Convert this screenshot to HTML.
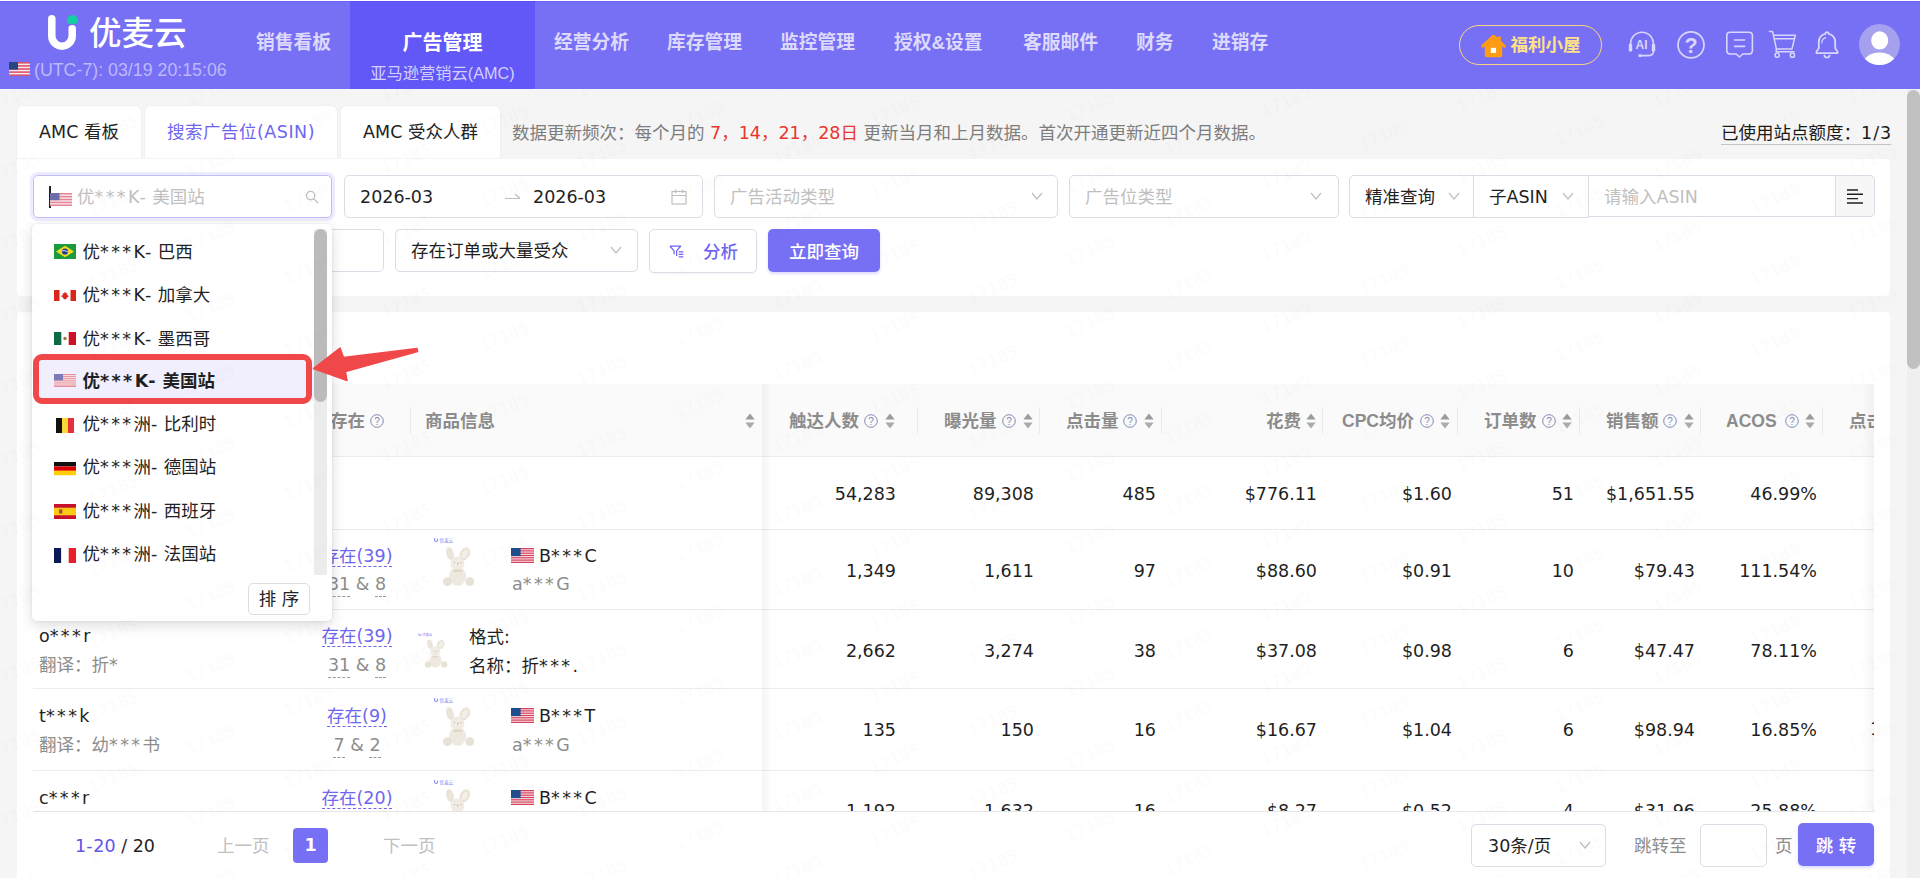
<!DOCTYPE html>
<html lang="zh-CN">
<head>
<meta charset="utf-8">
<title>优麦云 - 亚马逊营销云(AMC)</title>
<style>
*{box-sizing:border-box;margin:0;padding:0}
html,body{width:1920px;height:878px;overflow:hidden;background:#f5f5f5}
body{position:relative;font-family:"DejaVu Sans","Noto Sans CJK SC",sans-serif;font-size:17.5px;color:#1f1f1f;-webkit-font-smoothing:antialiased}
.abs{position:absolute}
.arial{font-family:"Liberation Sans","Noto Sans CJK SC",sans-serif}
svg{display:block}
/* ---------- header ---------- */
#hdr{position:absolute;left:0;top:1px;width:1920px;height:88px;background:#7770f5;font-family:"Liberation Sans","Noto Sans CJK SC",sans-serif}
#hdr .nav{position:absolute;top:0;height:88px;padding:0 19px;color:#dcd9fc;font-weight:bold;font-size:18.75px;line-height:84px;white-space:nowrap}
#hdr .nav.on{background:#6257f7;color:#fff;font-size:20px;line-height:84px;text-align:center}
#hdr .sub{position:absolute;left:0;right:0;top:60.5px;line-height:22px;font-size:16.25px;font-weight:normal;color:#d3cffd;text-align:center}
#logoTxt{position:absolute;left:89px;top:10px;font-size:32.5px;line-height:46px;color:#fff;font-weight:500;white-space:nowrap}
#tz{position:absolute;left:34px;top:57.5px;font-size:17.8px;line-height:22px;color:#bcb8fa;white-space:nowrap}
#pill{position:absolute;left:1459px;top:24px;width:143px;height:40px;border:1px solid #f7d67e;border-radius:20px}
#pill span{position:absolute;left:50.5px;top:0;line-height:38px;font-size:17.5px;font-weight:bold;color:#ffe18a;white-space:nowrap}
/* ---------- tabs ---------- */
.tab{position:absolute;top:105px;height:53px;background:#fff;border:1px solid #efefef;border-bottom:none;border-radius:7px 7px 0 0;line-height:52px;text-align:center;font-size:17.5px;color:#222;white-space:nowrap}
.tab.on{color:#6f66f0;letter-spacing:.5px}
#note{position:absolute;left:512px;top:119.5px;line-height:26px;font-size:17.5px;color:#7d7d7d;white-space:nowrap}
#note b{color:#e8352e;font-weight:normal}
#quota{position:absolute;left:1721px;top:120px;width:170px;line-height:26px;font-size:17.5px;color:#1a1a1a;border-bottom:1px solid #c4c4c4;white-space:nowrap;height:25px}
.card{position:absolute;background:#fff;border-radius:4px}

/* ---------- table ---------- */
#tbl{position:absolute;left:33px;top:384px;width:1841px;height:428px;overflow:hidden;background:#fff}
#thead{position:absolute;left:0;top:0;width:1841px;height:73px;background:#fafafa;border-bottom:1px solid #ececec}
.th{position:absolute;top:26px;line-height:22px;font-size:17.5px;font-weight:bold;color:#8c8c8c;white-space:nowrap;font-family:"Liberation Sans","Noto Sans CJK SC",sans-serif}
.vd{position:absolute;top:23px;width:1px;height:27px;background:#ebebeb}
.q{position:absolute;top:30px;width:14px;height:14px}
.so{position:absolute;top:29px;width:10px;height:16px}
.rl{position:absolute;left:0;width:1841px;height:1px;background:#ececec}
.num{position:absolute;line-height:26px;text-align:right;white-space:nowrap;font-size:17.5px;color:#1f1f1f}
.tx{position:absolute;line-height:26px;white-space:nowrap;font-size:17.5px;color:#1f1f1f}
.gr{color:#8c8c8c}
.lk{color:#6f66f0;border-bottom:1px dashed #6f66f0;line-height:24px;height:25px}
.du{border-bottom:1px dashed #9a9a9a;display:inline-block;line-height:22px;height:24px}
i.a{font-style:normal;letter-spacing:2.4px}
i.h{font-style:normal;letter-spacing:.9px}

/* ---------- dropdown ---------- */
#dd{position:absolute;left:32px;top:224px;width:300px;height:397px;background:#fff;border-radius:5px;box-shadow:0 4px 14px rgba(0,0,0,.14),0 0 3px rgba(0,0,0,.08)}
.opt{position:absolute;left:50.5px;line-height:26px;font-size:17.5px;color:#222;white-space:nowrap}
.fl{position:absolute;left:22px;width:22px;height:15px}
/* ---------- filter ---------- */
.inp{position:absolute;height:43px;background:#fff;border:1px solid #dddce6;border-radius:5px;line-height:42px;padding-left:15px;white-space:nowrap;font-size:17.5px;color:#1f1f1f}
.ph{color:#bfbfbf}
.chev{position:absolute;top:16px;width:12px;height:8px}
.btn{position:absolute;height:43px;border-radius:5px;line-height:46px;text-align:center;font-size:17.5px;white-space:nowrap}

</style>
</head>
<body>
<!-- HEADER -->
<div class="abs" style="left:0;top:0;width:1920px;height:1px;background:#fff"></div>
<div id="hdr">
  <div class="abs" style="left:0;top:0;width:1920px;height:1px;background:rgba(20,10,215,.12);z-index:2"></div>
  <svg class="abs" style="left:44px;top:10px" width="40" height="44" viewBox="44 11 40 44">
    <path d="M51.8 18.8 V36 A10.2 10.2 0 0 0 72.2 36 V28.8" fill="none" stroke="#fff" stroke-width="7.5" stroke-linecap="round"/>
    <path d="M67 20.6 a5.5 5.5 0 0 1 11 0 v1.2 q0 2 -2 2 h-7 q-2 0 -2 -2z" fill="#12cf9f"/>
  </svg>
  <div id="logoTxt">优麦云</div>
  <svg class="abs" style="left:9px;top:61px" width="21" height="14" viewBox="0 0 21 14">
    <rect width="21" height="14" fill="#f3e9ee"/>
    <g fill="#d9546a"><rect y="0" width="21" height="1.6"/><rect y="3.1" width="21" height="1.6"/><rect y="6.2" width="21" height="1.6"/><rect y="9.3" width="21" height="1.6"/><rect y="12.4" width="21" height="1.6"/></g>
    <rect width="9" height="7.6" fill="#27457f"/>
  </svg>
  <div id="tz">(UTC-7): 03/19 20:15:06</div>

  <div class="nav" style="left:237px">销售看板</div>
  <div class="nav on" style="left:350px;width:185px">广告管理<div class="sub">亚马逊营销云(AMC)</div></div>
  <div class="nav" style="left:535px">经营分析</div>
  <div class="nav" style="left:648px">库存管理</div>
  <div class="nav" style="left:761px">监控管理</div>
  <div class="nav" style="left:875px">授权&amp;设置</div>
  <div class="nav" style="left:1004px">客服邮件</div>
  <div class="nav" style="left:1117px">财务</div>
  <div class="nav" style="left:1193px">进销存</div>

  <div id="pill">
    <svg class="abs" style="left:20px;top:6px" width="28" height="26" viewBox="1480 31 28 26">
      <rect x="1497.600" y="35.5" width="3.200" height="7" fill="#ff9c12"/>
      <rect x="1484.800" y="43" width="17.400" height="13.200" rx="1.600" fill="#ff9c12"/>
      <path d="M1482.800 45.200 L1493.500 35.200 L1504.200 45.200" fill="none" stroke="#ff9c12" stroke-width="3" stroke-linecap="round" stroke-linejoin="round"/>
      <path d="M1486 44 L1493.500 37 L1501 44z" fill="#ff9c12"/>
      <rect x="1490.800" y="46.800" width="5.200" height="5.200" fill="#fff"/>
    </svg>
    <span>福利小屋</span>
  </div>
  <!-- header icons -->
  <svg class="abs" style="left:1624px;top:27px" width="36" height="34" viewBox="1624 28 36 34" fill="none" stroke="#d9d6fb" stroke-width="1.600" stroke-linecap="round">
    <path d="M1630.600 45 V43.600 A11.400 11.400 0 0 1 1653.400 43.600 V45"/>
    <rect x="1628.800" y="43.800" width="3.400" height="7.600" rx="1.200" fill="#d9d6fb" stroke="none"/>
    <rect x="1651.800" y="43.800" width="3.400" height="7.600" rx="1.200" fill="#d9d6fb" stroke="none"/>
    <path d="M1653.600 51 q0 4.600 -5 4.600 h-6.500"/>
    <rect x="1638.400" y="54.200" width="3.600" height="2.800" rx="1" fill="#d9d6fb" stroke="none"/>
    <text x="1641.600" y="48.500" font-family="Liberation Sans, sans-serif" font-size="12" font-weight="bold" fill="#d9d6fb" stroke="none" text-anchor="middle">AI</text>
  </svg>
  <svg class="abs" style="left:1675px;top:28px" width="32" height="32" viewBox="1675 29 32 32" fill="none" stroke="#d9d6fb" stroke-width="1.700">
    <circle cx="1691" cy="44.900" r="13"/>
    <text x="1691" y="52.900" font-family="Liberation Sans, sans-serif" font-size="21.5" font-weight="bold" fill="#d9d6fb" stroke="none" text-anchor="middle">?</text>
  </svg>
  <svg class="abs" style="left:1724px;top:28px" width="32" height="32" viewBox="1724 29 32 32" fill="none" stroke="#d9d6fb" stroke-width="1.600" stroke-linecap="round" stroke-linejoin="round">
    <path d="M1730 32.200 h19.200 a3.200 3.200 0 0 1 3.200 3.200 v15.400 a3.200 3.200 0 0 1 -3.200 3.200 h-6.400 l-3.300 3 l-3.300 -3 h-6.200 a3.200 3.200 0 0 1 -3.200 -3.200 v-15.400 a3.200 3.200 0 0 1 3.200 -3.200z"/>
    <path d="M1734.600 40 h10 M1734.600 46.400 h10"/>
  </svg>
  <svg class="abs" style="left:1766px;top:28px" width="34" height="32" viewBox="1766 29 34 32" fill="none" stroke="#d9d6fb" stroke-width="1.500" stroke-linecap="round" stroke-linejoin="round">
    <path d="M1769.400 31.600 h3.200 l3.800 17.300 h15.600 l3.300 -13.600 h-21.800"/>
    <path d="M1774.400 38.800 h20"/>
    <path d="M1776.600 49 q-1.600 2.800 1.200 2.800 h16.200"/>
    <circle cx="1777.200" cy="55.200" r="2.100"/><circle cx="1792.400" cy="55.200" r="2.100"/>
  </svg>
  <svg class="abs" style="left:1814px;top:29px" width="26" height="30" viewBox="0 0 26 30" fill="none" stroke="#d9d6fb" stroke-width="1.8" stroke-linecap="round" stroke-linejoin="round">
    <path d="M13 2.2 a1.6 1.6 0 0 1 1.6 1.6 a8 8 0 0 1 6.6 8 v6.5 l2.3 3.2 v1.7 H2.5 v-1.7 l2.3 -3.2 v-6.5 a8 8 0 0 1 6.6 -8 a1.6 1.6 0 0 1 1.6 -1.6z"/>
    <path d="M10.3 25.5 a2.8 2.8 0 0 0 5.4 0"/><path d="M7.800 13 a5.600 5.600 0 0 1 4 -5.400" stroke-width="1.200"/>
  </svg>
  <svg class="abs" style="left:1859px;top:23px" width="41" height="41" viewBox="0 0 41 41">
    <defs><clipPath id="avc"><circle cx="20.5" cy="20.5" r="20.5"/></clipPath></defs>
    <circle cx="20.5" cy="20.5" r="20.5" fill="#a6a1ee"/>
    <g clip-path="url(#avc)" fill="#fff"><ellipse cx="20.700" cy="16.400" rx="8.500" ry="9.200"/><ellipse cx="20.5" cy="41" rx="17" ry="12.5"/></g>
  </svg>
</div>

<!-- TABS -->
<div class="tab" style="left:16px;width:126px">AMC 看板</div>
<div class="tab on" style="left:144px;width:194px">搜索广告位(ASIN)</div>
<div class="tab" style="left:340px;width:161px">AMC 受众人群</div>
<div id="note">数据更新频次：每个月的 <b>7，14，21，28日</b> 更新当月和上月数据。首次开通更新近四个月数据。</div>
<div id="quota">已使用站点额度：1<span style="padding:0 1px">/</span>3</div>

<!-- FILTER CARD -->
<div class="card" style="left:17px;top:159px;width:1873px;height:137px"></div>
<div class="inp" style="left:33px;top:175px;width:299px;border-color:#c2bef9;box-shadow:0 0 0 3px rgba(119,112,245,.13)">
  <div class="abs" style="left:15px;top:10px;width:2px;height:22px;background:#222"></div>
  <svg class="abs" style="left:16px;top:17px" width="22" height="13" viewBox="0 0 22 13"><rect width="22" height="13" fill="#f8eaee"/><g fill="#e58494"><rect y="0" width="22" height="1.5"/><rect y="2.9" width="22" height="1.5"/><rect y="5.8" width="22" height="1.5"/><rect y="8.7" width="22" height="1.5"/><rect y="11.5" width="22" height="1.5"/></g><rect width="9.5" height="7.2" fill="#6d6ca8"/></svg>
  <span class="ph" style="margin-left:28px">优<i class="a">***</i>K<i class="h">-</i> 美国站</span>
  <svg class="abs" style="left:271px;top:14px" width="14" height="14" viewBox="0 0 14 14" fill="none" stroke="#bfbfbf" stroke-width="1.3"><circle cx="5.6" cy="5.6" r="4.2"/><path d="M8.8 8.8 L13 13"/></svg>
</div>
<div class="inp" style="left:344px;top:175px;width:359px">2026-03
  <svg class="abs" style="left:160px;top:15px" width="16" height="10" viewBox="0 0 16 10" fill="none" stroke="#bfbfbf" stroke-width="1.2"><path d="M0 7.5 H15 M10 3 L15 7.5"/></svg>
  <span class="abs" style="left:188px;top:0">2026-03</span>
  <svg class="abs" style="left:326px;top:13px" width="16" height="16" viewBox="0 0 16 16" fill="none" stroke="#bfbfbf" stroke-width="1.2"><rect x="1" y="2.5" width="14" height="12.5"/><path d="M1 6.5 H15 M4.5 0.5 V4 M11.5 0.5 V4"/></svg>
</div>
<div class="inp" style="left:714px;top:175px;width:344px"><span class="ph">广告活动类型</span><svg class="chev" style="left:316px" viewBox="0 0 12 8"><path d="M1 1 L6 7 L11 1" fill="none" stroke="#bfbfbf" stroke-width="1.2"/></svg></div>
<div class="inp" style="left:1069px;top:175px;width:270px"><span class="ph">广告位类型</span><svg class="chev" style="left:240px" viewBox="0 0 12 8"><path d="M1 1 L6 7 L11 1" fill="none" stroke="#bfbfbf" stroke-width="1.2"/></svg></div>
<div class="inp" style="left:1349px;top:175px;width:125px;border-radius:5px 0 0 5px">精准查询<svg class="chev" style="left:98px" viewBox="0 0 12 8"><path d="M1 1 L6 7 L11 1" fill="none" stroke="#bfbfbf" stroke-width="1.2"/></svg></div>
<div class="inp" style="left:1473px;top:175px;width:116px;border-radius:0;border-right:none">子ASIN<svg class="chev" style="left:88px" viewBox="0 0 12 8"><path d="M1 1 L6 7 L11 1" fill="none" stroke="#bfbfbf" stroke-width="1.2"/></svg></div>
<div class="inp" style="left:1588px;top:175px;width:248px;height:42px;border-radius:0"><span class="ph">请输入ASIN</span></div>
<div class="inp" style="left:1835px;top:175px;width:40px;height:42px;border-radius:0 5px 5px 0;background:#f7f7f7;padding:0">
  <svg class="abs" style="left:11px;top:13px" width="17" height="15" viewBox="0 0 17 15" stroke="#222" stroke-width="1.4"><path d="M0 1 H11 M0 5.3 H16 M0 9.6 H11 M0 14 H16"/></svg>
</div>
<div class="inp" style="left:140px;top:229px;width:244px"></div>
<div class="inp" style="left:395px;top:229px;width:243px">存在订单或大量受众<svg class="chev" style="left:214px" viewBox="0 0 12 8"><path d="M1 1 L6 7 L11 1" fill="none" stroke="#bfbfbf" stroke-width="1.2"/></svg></div>
<div class="btn" style="left:649px;top:229px;width:108px;background:#fff;border:1px solid #dddce6;color:#6f66f0;height:44px;line-height:44px;box-shadow:0 2px 2px rgba(0,0,0,.03)">
  <svg class="abs" style="left:19px;top:15px" width="15.2" height="13.5" viewBox="0 0 18 16" fill="none" stroke="#6f66f0" stroke-width="1.5" stroke-linejoin="round"><path d="M1 1.2 H14 L9 7 V13 M1 1.2 L6 7 V11"/><path d="M11.5 8.2 H17 M11.5 11.2 H17 M11.5 14.2 H17"/></svg>
  <span class="abs" style="left:53px;top:0;font-weight:500">分析</span>
</div>
<div class="btn" style="left:768px;top:229px;width:112px;background:#7770f5;color:#fff;font-weight:500;box-shadow:0 2px 3px rgba(119,112,245,.25)">立即查询</div>
<!--FILTER-->
<!-- TABLE CARD -->
<div class="card" style="left:17px;top:312px;width:1873px;height:566px;border-radius:4px 4px 0 0"></div>
<div id="tbl"><div id="thead"><div class="th" style="left:297px">存在</div><svg class="q" style="left:337px" viewBox="0 0 14 14"><circle cx="7" cy="7" r="6.3" fill="none" stroke="#808ab3" stroke-width="1"/><text x="7" y="10.6" font-family="Liberation Sans,sans-serif" font-size="10" fill="#808ab3" text-anchor="middle">?</text></svg><div class="vd" style="left:377px"></div><div class="th" style="left:392px">商品信息</div><svg class="so" style="left:712px" viewBox="0 0 10 16"><path d="M5 0.5 L9.7 6.5 H0.3z" fill="#9b9b9b"/><path d="M5 15.5 L9.7 9.5 H0.3z" fill="#ababab"/></svg><div class="th" style="left:756px">触达人数</div><svg class="q" style="left:831px" viewBox="0 0 14 14"><circle cx="7" cy="7" r="6.3" fill="none" stroke="#808ab3" stroke-width="1"/><text x="7" y="10.6" font-family="Liberation Sans,sans-serif" font-size="10" fill="#808ab3" text-anchor="middle">?</text></svg><svg class="so" style="left:852px" viewBox="0 0 10 16"><path d="M5 0.5 L9.7 6.5 H0.3z" fill="#9b9b9b"/><path d="M5 15.5 L9.7 9.5 H0.3z" fill="#ababab"/></svg><div class="vd" style="left:884px"></div><div class="th" style="left:911px">曝光量</div><svg class="q" style="left:969px" viewBox="0 0 14 14"><circle cx="7" cy="7" r="6.3" fill="none" stroke="#808ab3" stroke-width="1"/><text x="7" y="10.6" font-family="Liberation Sans,sans-serif" font-size="10" fill="#808ab3" text-anchor="middle">?</text></svg><svg class="so" style="left:990px" viewBox="0 0 10 16"><path d="M5 0.5 L9.7 6.5 H0.3z" fill="#9b9b9b"/><path d="M5 15.5 L9.7 9.5 H0.3z" fill="#ababab"/></svg><div class="vd" style="left:1006px"></div><div class="th" style="left:1033px">点击量</div><svg class="q" style="left:1090px" viewBox="0 0 14 14"><circle cx="7" cy="7" r="6.3" fill="none" stroke="#808ab3" stroke-width="1"/><text x="7" y="10.6" font-family="Liberation Sans,sans-serif" font-size="10" fill="#808ab3" text-anchor="middle">?</text></svg><svg class="so" style="left:1111px" viewBox="0 0 10 16"><path d="M5 0.5 L9.7 6.5 H0.3z" fill="#9b9b9b"/><path d="M5 15.5 L9.7 9.5 H0.3z" fill="#ababab"/></svg><div class="vd" style="left:1128px"></div><div class="th" style="left:1233px">花费</div><svg class="so" style="left:1273px" viewBox="0 0 10 16"><path d="M5 0.5 L9.7 6.5 H0.3z" fill="#9b9b9b"/><path d="M5 15.5 L9.7 9.5 H0.3z" fill="#ababab"/></svg><div class="vd" style="left:1289px"></div><div class="th" style="left:1309px">CPC均价</div><svg class="q" style="left:1387px" viewBox="0 0 14 14"><circle cx="7" cy="7" r="6.3" fill="none" stroke="#808ab3" stroke-width="1"/><text x="7" y="10.6" font-family="Liberation Sans,sans-serif" font-size="10" fill="#808ab3" text-anchor="middle">?</text></svg><svg class="so" style="left:1407px" viewBox="0 0 10 16"><path d="M5 0.5 L9.7 6.5 H0.3z" fill="#9b9b9b"/><path d="M5 15.5 L9.7 9.5 H0.3z" fill="#ababab"/></svg><div class="vd" style="left:1424px"></div><div class="th" style="left:1451px">订单数</div><svg class="q" style="left:1509px" viewBox="0 0 14 14"><circle cx="7" cy="7" r="6.3" fill="none" stroke="#808ab3" stroke-width="1"/><text x="7" y="10.6" font-family="Liberation Sans,sans-serif" font-size="10" fill="#808ab3" text-anchor="middle">?</text></svg><svg class="so" style="left:1529px" viewBox="0 0 10 16"><path d="M5 0.5 L9.7 6.5 H0.3z" fill="#9b9b9b"/><path d="M5 15.5 L9.7 9.5 H0.3z" fill="#ababab"/></svg><div class="vd" style="left:1546px"></div><div class="th" style="left:1573px">销售额</div><svg class="q" style="left:1630px" viewBox="0 0 14 14"><circle cx="7" cy="7" r="6.3" fill="none" stroke="#808ab3" stroke-width="1"/><text x="7" y="10.6" font-family="Liberation Sans,sans-serif" font-size="10" fill="#808ab3" text-anchor="middle">?</text></svg><svg class="so" style="left:1651px" viewBox="0 0 10 16"><path d="M5 0.5 L9.7 6.5 H0.3z" fill="#9b9b9b"/><path d="M5 15.5 L9.7 9.5 H0.3z" fill="#ababab"/></svg><div class="vd" style="left:1667px"></div><div class="th" style="left:1693px">ACOS</div><svg class="q" style="left:1752px" viewBox="0 0 14 14"><circle cx="7" cy="7" r="6.3" fill="none" stroke="#808ab3" stroke-width="1"/><text x="7" y="10.6" font-family="Liberation Sans,sans-serif" font-size="10" fill="#808ab3" text-anchor="middle">?</text></svg><svg class="so" style="left:1772px" viewBox="0 0 10 16"><path d="M5 0.5 L9.7 6.5 H0.3z" fill="#9b9b9b"/><path d="M5 15.5 L9.7 9.5 H0.3z" fill="#ababab"/></svg><div class="vd" style="left:1789px"></div><div class="th" style="left:1816px">点击率</div></div><div class="num" style="left:713px;top:97px;width:150px">54,283</div><div class="num" style="left:851px;top:97px;width:150px">89,308</div><div class="num" style="left:973px;top:97px;width:150px">485</div><div class="num" style="left:1134px;top:97px;width:150px">$776.11</div><div class="num" style="left:1269px;top:97px;width:150px">$1.60</div><div class="num" style="left:1391px;top:97px;width:150px">51</div><div class="num" style="left:1512px;top:97px;width:150px">$1,651.55</div><div class="num" style="left:1634px;top:97px;width:150px">46.99%</div><div class="num" style="left:713px;top:174px;width:150px">1,349</div><div class="num" style="left:851px;top:174px;width:150px">1,611</div><div class="num" style="left:973px;top:174px;width:150px">97</div><div class="num" style="left:1134px;top:174px;width:150px">$88.60</div><div class="num" style="left:1269px;top:174px;width:150px">$0.91</div><div class="num" style="left:1391px;top:174px;width:150px">10</div><div class="num" style="left:1512px;top:174px;width:150px">$79.43</div><div class="num" style="left:1634px;top:174px;width:150px">111.54%</div><div class="num" style="left:713px;top:254px;width:150px">2,662</div><div class="num" style="left:851px;top:254px;width:150px">3,274</div><div class="num" style="left:973px;top:254px;width:150px">38</div><div class="num" style="left:1134px;top:254px;width:150px">$37.08</div><div class="num" style="left:1269px;top:254px;width:150px">$0.98</div><div class="num" style="left:1391px;top:254px;width:150px">6</div><div class="num" style="left:1512px;top:254px;width:150px">$47.47</div><div class="num" style="left:1634px;top:254px;width:150px">78.11%</div><div class="num" style="left:713px;top:333px;width:150px">135</div><div class="num" style="left:851px;top:333px;width:150px">150</div><div class="num" style="left:973px;top:333px;width:150px">16</div><div class="num" style="left:1134px;top:333px;width:150px">$16.67</div><div class="num" style="left:1269px;top:333px;width:150px">$1.04</div><div class="num" style="left:1391px;top:333px;width:150px">6</div><div class="num" style="left:1512px;top:333px;width:150px">$98.94</div><div class="num" style="left:1634px;top:333px;width:150px">16.85%</div><div class="num" style="left:713px;top:414px;width:150px">1,192</div><div class="num" style="left:851px;top:414px;width:150px">1,632</div><div class="num" style="left:973px;top:414px;width:150px">16</div><div class="num" style="left:1134px;top:414px;width:150px">$8.27</div><div class="num" style="left:1269px;top:414px;width:150px">$0.52</div><div class="num" style="left:1391px;top:414px;width:150px">4</div><div class="num" style="left:1512px;top:414px;width:150px">$31.96</div><div class="num" style="left:1634px;top:414px;width:150px">25.88%</div><div class="num" style="left:1837px;top:332px;width:auto;text-align:left">10.67%</div><div class="rl" style="top:145px"></div><div class="rl" style="top:225px"></div><div class="rl" style="top:304px"></div><div class="rl" style="top:386px"></div><div class="tx " style="left:6px;top:239px">o<i class="a">***</i>r</div>
<div class="tx gr" style="left:6px;top:268px">翻译：折<i class="a">*</i></div>
<div class="tx " style="left:6px;top:319px">t<i class="a">***</i>k</div>
<div class="tx gr" style="left:6px;top:348px">翻译：幼<i class="a">***</i>书</div>
<div class="tx " style="left:6px;top:401px">c<i class="a">***</i>r</div>
<div class="tx " style="left:264px;top:159px;width:120px;text-align:center"><span class="lk">存在(39)</span></div><div class="tx gr" style="left:264px;top:187px;width:120px;text-align:center"><span class="du">31</span> &amp; <span class="du">8</span></div>
<div class="tx " style="left:264px;top:239px;width:120px;text-align:center"><span class="lk">存在(39)</span></div><div class="tx gr" style="left:264px;top:268px;width:120px;text-align:center"><span class="du">31</span> &amp; <span class="du">8</span></div>
<div class="tx " style="left:264px;top:319px;width:120px;text-align:center"><span class="lk">存在(9)</span></div><div class="tx gr" style="left:264px;top:348px;width:120px;text-align:center"><span class="du">7</span> &amp; <span class="du">2</span></div>
<div class="tx " style="left:264px;top:401px;width:120px;text-align:center"><span class="lk">存在(20)</span></div>
<svg class="abs" style="left:399px;top:151px" width="50.0" height="56.0" viewBox="432 535 50 56"><g fill="#8d87f0"><path d="M434.6 538 v2 a1.5 1.5 0 0 0 3 0 v-1.2" fill="none" stroke="#8d87f0" stroke-width="1.1"/><text x="439.6" y="542.2" font-size="4.6" font-family="Noto Sans CJK SC,sans-serif">优麦云</text></g><ellipse cx="450" cy="553.6" rx="3.8" ry="6.6" transform="rotate(-14 450 553.6)" fill="#ebe5d9"/><ellipse cx="464.8" cy="553.8" rx="4.900" ry="6.8" transform="rotate(28 464.8 553.8)" fill="#e9e3d7"/><ellipse cx="464.8" cy="554" rx="2.6" ry="4.6" transform="rotate(28 464.8 554)" fill="#f3eee6"/><ellipse cx="457.6" cy="576.2" rx="8.400" ry="9.6" fill="#eee9df"/><circle cx="447.4" cy="581.6" r="4.4" fill="#e8e1d5"/><circle cx="469.8" cy="581.6" r="4.4" fill="#e8e1d5"/><circle cx="457.4" cy="563.6" r="7" fill="#f1ece3"/><ellipse cx="457.6" cy="570.8" rx="4.600" ry="1.200" fill="#ddd5c7"/><circle cx="457.8" cy="563.6" r="0.9" fill="#f2a0b4"/><circle cx="454.6" cy="562.6" r="0.6" fill="#9fb0b8"/><circle cx="461" cy="562.6" r="0.6" fill="#9fb0b8"/></svg><svg class="abs" style="left:478px;top:164px" width="23" height="15" viewBox="0 0 23 15"><rect width="23" height="15" fill="#f7e4e8"/><g fill="#d6405c"><rect y="0" width="23" height="1.3"/><rect y="2.3" width="23" height="1.2"/><rect y="4.6" width="23" height="1.2"/><rect y="6.9" width="23" height="1.2"/><rect y="9.2" width="23" height="1.2"/><rect y="11.5" width="23" height="1.2"/><rect y="13.8" width="23" height="1.2"/></g><rect width="9.6" height="8.1" fill="#1f4f8a"/></svg><div class="tx " style="left:506px;top:159px">B<i class="a">***</i>C</div><div class="tx gr" style="left:479px;top:187px">a<i class="a">***</i>G</div>
<svg class="abs" style="left:384px;top:247px" width="36.0" height="40.3" viewBox="432 535 50 56"><g fill="#8d87f0"><path d="M434.6 538 v2 a1.5 1.5 0 0 0 3 0 v-1.2" fill="none" stroke="#8d87f0" stroke-width="1.1"/><text x="439.6" y="542.2" font-size="4.6" font-family="Noto Sans CJK SC,sans-serif">优麦云</text></g><ellipse cx="450" cy="553.6" rx="3.8" ry="6.6" transform="rotate(-14 450 553.6)" fill="#ebe5d9"/><ellipse cx="464.8" cy="553.8" rx="4.900" ry="6.8" transform="rotate(28 464.8 553.8)" fill="#e9e3d7"/><ellipse cx="464.8" cy="554" rx="2.6" ry="4.6" transform="rotate(28 464.8 554)" fill="#f3eee6"/><ellipse cx="457.6" cy="576.2" rx="8.400" ry="9.6" fill="#eee9df"/><circle cx="447.4" cy="581.6" r="4.4" fill="#e8e1d5"/><circle cx="469.8" cy="581.6" r="4.4" fill="#e8e1d5"/><circle cx="457.4" cy="563.6" r="7" fill="#f1ece3"/><ellipse cx="457.6" cy="570.8" rx="4.600" ry="1.200" fill="#ddd5c7"/><circle cx="457.8" cy="563.6" r="0.9" fill="#f2a0b4"/><circle cx="454.6" cy="562.6" r="0.6" fill="#9fb0b8"/><circle cx="461" cy="562.6" r="0.6" fill="#9fb0b8"/></svg><div class="tx " style="left:436px;top:240px">格式:</div><div class="tx " style="left:436px;top:269px">名称：折<i class="a">***</i>.</div>
<svg class="abs" style="left:399px;top:311px" width="50.0" height="56.0" viewBox="432 535 50 56"><g fill="#8d87f0"><path d="M434.6 538 v2 a1.5 1.5 0 0 0 3 0 v-1.2" fill="none" stroke="#8d87f0" stroke-width="1.1"/><text x="439.6" y="542.2" font-size="4.6" font-family="Noto Sans CJK SC,sans-serif">优麦云</text></g><ellipse cx="450" cy="553.6" rx="3.8" ry="6.6" transform="rotate(-14 450 553.6)" fill="#ebe5d9"/><ellipse cx="464.8" cy="553.8" rx="4.900" ry="6.8" transform="rotate(28 464.8 553.8)" fill="#e9e3d7"/><ellipse cx="464.8" cy="554" rx="2.6" ry="4.6" transform="rotate(28 464.8 554)" fill="#f3eee6"/><ellipse cx="457.6" cy="576.2" rx="8.400" ry="9.6" fill="#eee9df"/><circle cx="447.4" cy="581.6" r="4.4" fill="#e8e1d5"/><circle cx="469.8" cy="581.6" r="4.4" fill="#e8e1d5"/><circle cx="457.4" cy="563.6" r="7" fill="#f1ece3"/><ellipse cx="457.6" cy="570.8" rx="4.600" ry="1.200" fill="#ddd5c7"/><circle cx="457.8" cy="563.6" r="0.9" fill="#f2a0b4"/><circle cx="454.6" cy="562.6" r="0.6" fill="#9fb0b8"/><circle cx="461" cy="562.6" r="0.6" fill="#9fb0b8"/></svg><svg class="abs" style="left:478px;top:324px" width="23" height="15" viewBox="0 0 23 15"><rect width="23" height="15" fill="#f7e4e8"/><g fill="#d6405c"><rect y="0" width="23" height="1.3"/><rect y="2.3" width="23" height="1.2"/><rect y="4.6" width="23" height="1.2"/><rect y="6.9" width="23" height="1.2"/><rect y="9.2" width="23" height="1.2"/><rect y="11.5" width="23" height="1.2"/><rect y="13.8" width="23" height="1.2"/></g><rect width="9.6" height="8.1" fill="#1f4f8a"/></svg><div class="tx " style="left:506px;top:319px">B<i class="a">***</i>T</div><div class="tx gr" style="left:479px;top:348px">a<i class="a">***</i>G</div>
<svg class="abs" style="left:399px;top:393px" width="50.0" height="56.0" viewBox="432 535 50 56"><g fill="#8d87f0"><path d="M434.6 538 v2 a1.5 1.5 0 0 0 3 0 v-1.2" fill="none" stroke="#8d87f0" stroke-width="1.1"/><text x="439.6" y="542.2" font-size="4.6" font-family="Noto Sans CJK SC,sans-serif">优麦云</text></g><ellipse cx="450" cy="553.6" rx="3.8" ry="6.6" transform="rotate(-14 450 553.6)" fill="#ebe5d9"/><ellipse cx="464.8" cy="553.8" rx="4.900" ry="6.8" transform="rotate(28 464.8 553.8)" fill="#e9e3d7"/><ellipse cx="464.8" cy="554" rx="2.6" ry="4.6" transform="rotate(28 464.8 554)" fill="#f3eee6"/><ellipse cx="457.6" cy="576.2" rx="8.400" ry="9.6" fill="#eee9df"/><circle cx="447.4" cy="581.6" r="4.4" fill="#e8e1d5"/><circle cx="469.8" cy="581.6" r="4.4" fill="#e8e1d5"/><circle cx="457.4" cy="563.6" r="7" fill="#f1ece3"/><ellipse cx="457.6" cy="570.8" rx="4.600" ry="1.200" fill="#ddd5c7"/><circle cx="457.8" cy="563.6" r="0.9" fill="#f2a0b4"/><circle cx="454.6" cy="562.6" r="0.6" fill="#9fb0b8"/><circle cx="461" cy="562.6" r="0.6" fill="#9fb0b8"/></svg><svg class="abs" style="left:478px;top:406px" width="23" height="15" viewBox="0 0 23 15"><rect width="23" height="15" fill="#f7e4e8"/><g fill="#d6405c"><rect y="0" width="23" height="1.3"/><rect y="2.3" width="23" height="1.2"/><rect y="4.6" width="23" height="1.2"/><rect y="6.9" width="23" height="1.2"/><rect y="9.2" width="23" height="1.2"/><rect y="11.5" width="23" height="1.2"/><rect y="13.8" width="23" height="1.2"/></g><rect width="9.6" height="8.1" fill="#1f4f8a"/></svg><div class="tx " style="left:506px;top:401px">B<i class="a">***</i>C</div>

<div class="abs" style="left:729px;top:0;width:10px;height:428px;background:linear-gradient(90deg,rgba(0,0,0,.045),rgba(0,0,0,0))"></div>
<div class="abs" style="left:1829px;top:0;width:12px;height:428px;background:linear-gradient(90deg,rgba(0,0,0,0),rgba(0,0,0,.035))"></div>
</div>
<!--TABLE-->
<!-- STORE DROPDOWN -->
<div id="dd">
<div class="abs" style="left:262px;top:137px;width:20px;height:40px;background:#f3f1fe"></div><div class="abs" style="left:1px;top:130px;width:279px;height:50px;background:#f1effe;border:6px solid #f04848;border-radius:9px"></div>
<svg class="fl" style="top:20px;left:22px;width:22px" viewBox="0 0 22 15"><rect width="22" height="15" fill="#1a9b3c"/><path d="M11 1.8 L20 7.5 L11 13.2 L2 7.5z" fill="#f8d825"/><circle cx="11" cy="7.5" r="3.1" fill="#1c3e91"/><path d="M8 6.8 q3 -0.9 6 1.2" stroke="#fff" stroke-width=".8" fill="none"/></svg>
<div class="opt" style="top:15px">优<i class="a">***</i>K<i class="h">-</i> 巴西</div>
<svg class="fl" style="top:64px;left:22px;width:22px" viewBox="0 0 22 15"><rect width="22" height="11" y="2" fill="#fff"/><rect y="2" width="5.5" height="11" fill="#d8261c"/><rect x="16.5" y="2" width="5.5" height="11" fill="#d8261c"/><path d="M11 3.5 l1 2 l1.4 -.4 l-.5 2.3 l1.5 -.6 l-.4 1 l1 .4 l-2.6 1.8 l.3 1 h-1.4 v1 h-.6 v-1 h-1.4 l.3 -1 l-2.6 -1.8 l1 -.4 l-.4 -1 l1.500 .6 l-.5 -2.3 l1.400 .4z" fill="#d8261c"/></svg>
<div class="opt" style="top:58px">优<i class="a">***</i>K<i class="h">-</i> 加拿大</div>
<svg class="fl" style="top:107px;left:22px;width:22px" viewBox="0 0 22 15"><rect width="22" height="13" y="1" fill="#fff"/><rect y="1" width="7.3" height="13" fill="#0b6b42"/><rect x="14.7" y="1" width="7.3" height="13" fill="#ce1126"/><circle cx="11" cy="7.5" r="1.7" fill="#9a7a3a"/></svg>
<div class="opt" style="top:102px">优<i class="a">***</i>K<i class="h">-</i> 墨西哥</div>
<svg class="fl" style="top:149px;left:22px;width:22px" viewBox="0 0 22 15"><rect width="22" height="13" y="1" fill="#fbeef0"/><g fill="#e7909c"><rect y="1" width="22" height="1.2"/><rect y="3.1" width="22" height="1.1"/><rect y="5.2" width="22" height="1.1"/><rect y="7.3" width="22" height="1.1"/><rect y="9.4" width="22" height="1.1"/><rect y="11.5" width="22" height="1.1"/><rect y="12.9" width="22" height="1.1"/></g><rect y="1" width="9" height="6.4" fill="#7c7bb5"/></svg>
<div class="opt" style="top:144px;font-weight:bold;color:#1f1f1f">优<i class="a">***</i>K<i class="h">-</i> 美国站</div>
<svg class="fl" style="top:194px;left:24px;width:18px" viewBox="0 0 18 15"><rect width="6" height="15" fill="#111"/><rect x="6" width="6" height="15" fill="#fbd935"/><rect x="12" width="6" height="15" fill="#e8303a"/></svg>
<div class="opt" style="top:187px">优<i class="a">***</i>洲<i class="h">-</i> 比利时</div>
<svg class="fl" style="top:238px;left:22px;width:22px" viewBox="0 0 22 15"><rect width="22" height="4.4" fill="#111"/><rect y="4.4" width="22" height="4.4" fill="#dd0000"/><rect y="8.800" width="22" height="4.4" fill="#ffce00"/></svg>
<div class="opt" style="top:230px">优<i class="a">***</i>洲<i class="h">-</i> 德国站</div>
<svg class="fl" style="top:280px;left:22px;width:22px" viewBox="0 0 22 15"><rect width="22" height="15" fill="#c8102e"/><rect y="3.700" width="22" height="7.6" fill="#fcc917"/><rect x="5" y="5.3" width="3.4" height="4.2" fill="#a0522d"/></svg>
<div class="opt" style="top:274px">优<i class="a">***</i>洲<i class="h">-</i> 西班牙</div>
<svg class="fl" style="top:324px;left:22px;width:22px" viewBox="0 0 22 15"><rect width="7.300" height="15" fill="#0b1a55"/><rect x="7.3" width="7.400" height="15" fill="#fff"/><rect x="14.7" width="7.300" height="15" fill="#e8202a"/></svg>
<div class="opt" style="top:317px">优<i class="a">***</i>洲<i class="h">-</i> 法国站</div>
<div class="abs" style="left:282px;top:5px;width:13px;height:346px;background:#ececec;border-radius:2px"></div>
<div class="abs" style="left:282px;top:5px;width:13px;height:173px;background:#bbb;border-radius:6.5px"></div>
<div class="abs" style="left:216px;top:359px;width:62px;height:32px;border:1px solid #dcdce4;border-radius:5px;line-height:30px;text-align:center;font-size:17.5px;color:#222;white-space:nowrap">排 序</div>
</div>
<svg class="abs" style="left:300px;top:335px" width="130" height="60" viewBox="300 335 130 60"><path d="M313.500 368.500 L340 348 L343.500 357.500 L417 348.500 L417.600 351.600 L345.500 371.500 L347 380.500z" fill="#f04848" stroke="#f04848" stroke-width="1.500" stroke-linejoin="round"/></svg>

<!-- FOOTER / PAGINATION -->
<div class="abs" style="left:17px;top:812px;width:1873px;height:66px;background:#fff"></div>
<div class="abs" style="left:33px;top:811px;width:1841px;height:1px;background:#e6e6e6"></div>
<div class="tx" style="left:75px;top:833px"><span style="color:#5f55e6">1<i class="h">-</i>20</span> / 20</div>
<div class="tx" style="left:217px;top:833px;color:#c0c0c0">上一页</div>
<div class="abs" style="left:293px;top:828px;width:35px;height:35px;background:#7770f5;border-radius:4px;color:#fff;font-weight:bold;text-align:center;line-height:35px;font-size:17.5px">1</div>
<div class="tx" style="left:383px;top:833px;color:#c0c0c0">下一页</div>
<div class="inp" style="left:1471px;top:824px;width:135px;padding-left:16px">30条/页<svg class="chev" style="left:107px" viewBox="0 0 12 8"><path d="M1 1 L6 7 L11 1" fill="none" stroke="#bfbfbf" stroke-width="1.2"/></svg></div>
<div class="tx" style="left:1634px;top:833px;color:#8c8c8c">跳转至</div>
<div class="inp" style="left:1700px;top:824px;width:67px"></div>
<div class="tx" style="left:1775px;top:833px;color:#8c8c8c">页</div>
<div class="btn" style="left:1798px;top:823px;width:76px;height:43px;background:#7770f5;color:#fff;font-weight:500;box-shadow:0 2px 3px rgba(119,112,245,.25)">跳 转</div>
<!-- page scrollbar -->
<div class="abs" style="left:1907px;top:89px;width:13px;height:789px;background:#efefef"></div>
<div class="abs" style="left:1907px;top:90px;width:13px;height:279px;background:#c0c0c0;border-radius:6.5px"></div>

<!-- watermark overlay -->
<svg class="abs" style="left:0;top:89px;pointer-events:none" width="1920" height="789" viewBox="0 89 1920 789">
  <defs><pattern id="wm" x="64.1" y="42.1" width="195.5" height="72" patternUnits="userSpaceOnUse" patternTransform="skewY(-1.38)">
    <text x="48.900" y="24" font-family="DejaVu Sans, sans-serif" font-size="16.25" fill="#000" fill-opacity="0.015" text-anchor="middle" transform="rotate(-22 48.900 18)">17185</text>
    <text x="146.600" y="60" font-family="DejaVu Sans, sans-serif" font-size="16.25" fill="#000" fill-opacity="0.015" text-anchor="middle" transform="rotate(-22 146.600 54)">17185</text>
  </pattern></defs>
  <rect x="0" y="89" width="1907" height="789" fill="url(#wm)"/>
</svg>
</body>
</html>
